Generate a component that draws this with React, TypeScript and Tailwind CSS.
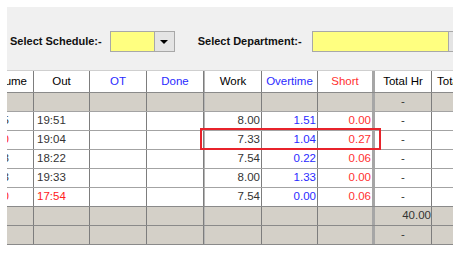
import React from 'react';

type Row = { inT: string; inRed?: boolean; out: string; outRed?: boolean; work: string; ot: string; short: string };

const rows: Row[] = [
  { inT: '08:55', out: '19:51', work: '8.00', ot: '1.51', short: '0.00' },
  { inT: '09:30', inRed: true, out: '19:04', work: '7.33', ot: '1.04', short: '0.27' },
  { inT: '08:38', out: '18:22', work: '7.54', ot: '0.22', short: '0.06' },
  { inT: '08:23', out: '19:33', work: '8.00', ot: '1.33', short: '0.00' },
  { inT: '09:00', inRed: true, out: '17:54', outRed: true, work: '7.54', ot: '0.00', short: '0.06' },
];

// one row of cells, fixed column widths matching the grid lines
function Cells({ h, bg, line, c }: { h: string; bg: string; line: string; c: React.ReactNode[] }) {
  return (
    <div className={`flex ${h} ${bg} border-b ${line}`}>
      <div className="w-[27px] shrink-0 border-r border-[#7d7d7d] overflow-hidden flex justify-end">
        <div className="w-[56px] shrink-0 flex items-center">{c[0]}</div>
      </div>
      <div className="w-[56px] shrink-0 border-r border-[#7d7d7d] flex items-center">{c[1]}</div>
      <div className="w-[57px] shrink-0 border-r border-[#7d7d7d] flex items-center">{c[2]}</div>
      <div className="w-[57px] shrink-0 border-r border-[#7d7d7d] flex items-center">{c[3]}</div>
      <div className="w-[1px] shrink-0 bg-[#b5b5b5]" />
      <div className="w-[57px] shrink-0 border-r border-[#7d7d7d] flex items-center">{c[4]}</div>
      <div className="w-[56px] shrink-0 border-r border-[#7d7d7d] flex items-center">{c[5]}</div>
      <div className="w-[57px] shrink-0 border-r-[3px] border-[#a6a6a6] flex items-center">{c[6]}</div>
      <div className="w-[57px] shrink-0 border-r border-[#7d7d7d] flex items-center">{c[7]}</div>
      <div className="w-[40px] shrink-0 flex items-center">{c[8]}</div>
    </div>
  );
}

const ctr = (t: string, cls = 'text-black') => <span className={`w-full text-center whitespace-nowrap ${cls}`}>{t}</span>;
const rgt = (t: string, cls = 'text-[#333]') => <span className={`w-full text-right pr-[1px] ${cls}`}>{t}</span>;
const lft = (t: string, cls = 'text-[#333]') => <span className={`w-full pl-[3px] ${cls}`}>{t}</span>;

export default function App() {
  return (
    <div className="w-[461px] h-[253px] bg-white pt-[7px] pl-[7px]" style={{ fontFamily: '"Liberation Sans", Arial, sans-serif' }}>
      <div className="relative w-[446px] overflow-hidden text-[11.5px]">
        {/* toolbar */}
        <div className="h-[63px] bg-[#f0f0f0] pt-[24px] pl-[3px] flex items-start text-[11px]">
          <div className="flex items-center h-[21px] whitespace-nowrap">
            <span className="font-bold text-[#111] mr-[8px] shrink-0">Select Schedule:-</span>
            <div className="w-[45px] h-[21px] bg-[#ffff80] border border-[#a8a8a8] shrink-0" />
            <div className="w-[20px] h-[21px] bg-[#e4e4e4] border border-[#a8a8a8] border-l-0 flex items-center justify-center shrink-0">
              <div className="w-0 h-0 border-l-[4px] border-r-[4px] border-t-[4px] border-l-transparent border-r-transparent border-t-black mt-[1px]" />
            </div>
            <span className="font-bold text-[#111] ml-[23px] mr-[10px] shrink-0">Select Department:-</span>
            <div className="w-[137px] h-[21px] bg-[#ffff80] border border-[#a8a8a8] shrink-0" />
            <div className="w-[20px] h-[21px] bg-[#e4e4e4] border border-[#a8a8a8] border-l-0 shrink-0" />
          </div>
        </div>

        {/* table */}
        <div className="border-t border-[#cfcfcf]">
          <Cells
            h="h-[22px]"
            bg="bg-white"
            line="border-[#8a8a8a]"
            c={[
              <span className="w-full text-right pr-[6px] text-black">Volume</span>,
              ctr('Out'),
              ctr('OT', 'text-[#2a2aff]'),
              ctr('Done', 'text-[#2a2aff]'),
              ctr('Work'),
              ctr('Overtime', 'text-[#2a2aff]'),
              ctr('Short', 'text-[#ff3030]'),
              ctr('Total Hr'),
              <span className="pl-[5px] text-black whitespace-nowrap">Total</span>,
            ]}
          />
          <Cells h="h-[19px]" bg="bg-[#d4d0c8]" line="border-[#a3a3a3]" c={['', '', '', '', '', '', '', ctr('-', 'text-[#333]'), '']} />
          {rows.map((r, i) => (
            <Cells
              key={i}
              h="h-[19px]"
              bg="bg-white"
              line={i === rows.length - 1 ? 'border-[#8a8a8a]' : 'border-[#a3a3a3]'}
              c={[
                lft(r.inT, r.inRed ? 'text-[#ff2020]' : 'text-[#333]'),
                lft(r.out, r.outRed ? 'text-[#ff2020]' : 'text-[#333]'),
                '',
                '',
                rgt(r.work),
                rgt(r.ot, 'text-[#2a2aff]'),
                rgt(r.short, 'text-[#ff3030]'),
                ctr('-', 'text-[#333]'),
                '',
              ]}
            />
          ))}
          <Cells h="h-[19px]" bg="bg-[#d4d0c8]" line="border-[#8a8a8a]" c={['', '', '', '', '', '', '', <span className="w-full text-right text-[#333]">40.00</span>, '']} />
          <Cells h="h-[19px]" bg="bg-[#d4d0c8]" line="border-[#8a8a8a]" c={['', '', '', '', '', '', '', ctr('-', 'text-[#333]'), '']} />
        </div>

        {/* highlight box over row 2 */}
        <div className="absolute left-[193px] top-[121px] w-[181px] h-[22px] border-2 border-[#e8232b]" />
      </div>
    </div>
  );
}
